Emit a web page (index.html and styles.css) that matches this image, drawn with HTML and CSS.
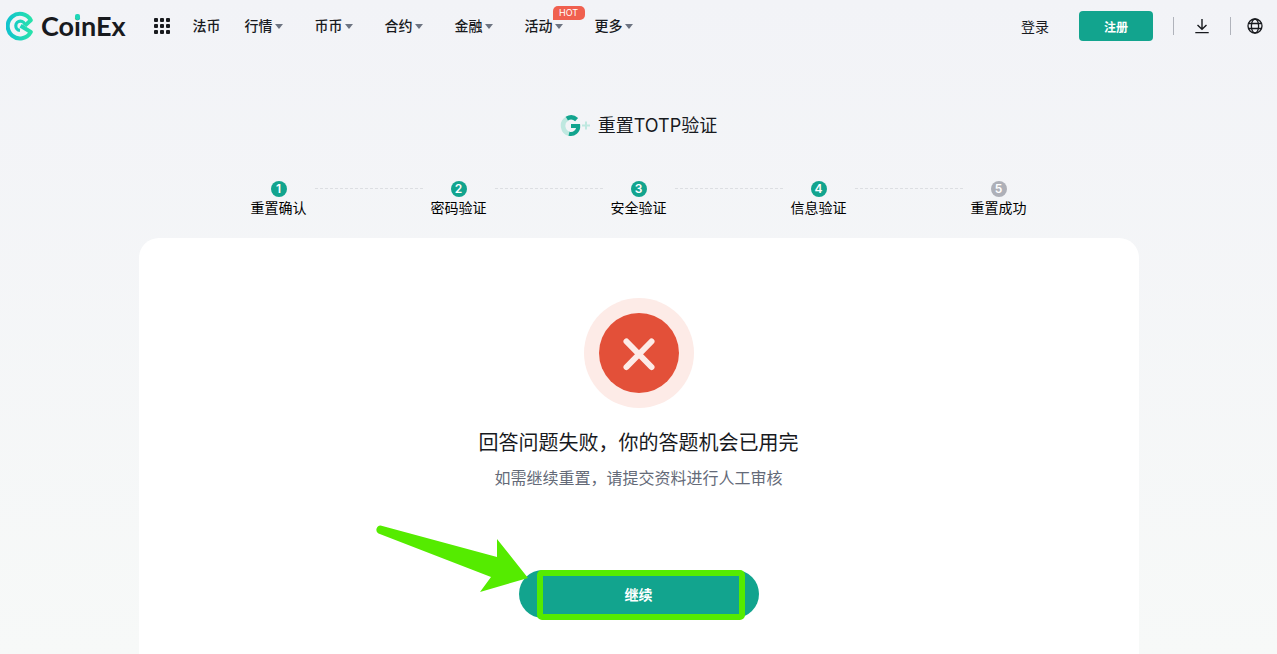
FILE: index.html
```html
<!DOCTYPE html>
<html lang="zh-CN">

<head>
    <meta charset="UTF-8">
    <meta name="viewport" content="width=device-width, initial-scale=1.0">
    <title>重置TOTP验证 - CoinEx</title>
    <link rel="stylesheet" href="styles.css">
</head>

<body>

    <!--* Top navigation -->
    <header class="header">
        <a href="#" class="logo">
            <svg class="logo-mark" viewBox="0 0 28 30" fill="none">
                <defs>
                    <linearGradient id="logoGradient" gradientUnits="userSpaceOnUse" x1="0" y1="0" x2="28" y2="0">
                        <stop offset="0" stop-color="#0fc2cf" />
                        <stop offset="1" stop-color="#2ae5a8" />
                    </linearGradient>
                </defs>
                <path d="M19 14.4L24.8 9.2A12.3 12.3 0 1 0 24.8 21L14.6 14.8" stroke="url(#logoGradient)"
                    stroke-width="4" stroke-linejoin="round" />
                <path d="M19 14.6A4.6 4.6 0 1 0 14 19.4" stroke="url(#logoGradient)" stroke-width="3.2" />
            </svg>
            <span class="logo-text">Co<span class="logo-i">i</span>nEx</span>
        </a>

        <button class="icon-button apps-button" aria-label="全部应用">
            <svg width="16" height="16" viewBox="0 0 16 16" fill="currentColor">
                <rect width="4" height="4" rx="1" />
                <rect x="6" width="4" height="4" rx="1" />
                <rect x="12" width="4" height="4" rx="1" />
                <rect y="6" width="4" height="4" rx="1" />
                <rect x="6" y="6" width="4" height="4" rx="1" />
                <rect x="12" y="6" width="4" height="4" rx="1" />
                <rect y="12" width="4" height="4" rx="1" />
                <rect x="6" y="12" width="4" height="4" rx="1" />
                <rect x="12" y="12" width="4" height="4" rx="1" />
            </svg>
        </button>

        <nav class="nav">
            <a href="#" class="nav-link">法币</a>
            <a href="#" class="nav-link has-menu">行情</a>
            <a href="#" class="nav-link has-menu">币币</a>
            <a href="#" class="nav-link has-menu">合约</a>
            <a href="#" class="nav-link has-menu">金融</a>
            <a href="#" class="nav-link has-menu">活动<span class="hot-badge">HOT</span></a>
            <a href="#" class="nav-link has-menu">更多</a>
        </nav>

        <div class="header-right">
            <a href="#" class="login-link">登录</a>
            <button class="register-button">注册</button>
            <div class="tools">
                <button class="icon-button download-button" aria-label="下载">
                    <svg width="16" height="16" viewBox="0 0 16 16" fill="none" stroke="currentColor"
                        stroke-width="1.4">
                        <path d="M8 1V11M3.5 7L8 11.3L12.5 7M1.3 14.6H14.7" />
                    </svg>
                </button>
                <button class="icon-button" aria-label="语言">
                    <svg width="16" height="16" viewBox="0 0 16 16" fill="none" stroke="currentColor"
                        stroke-width="1.3">
                        <circle cx="8" cy="8" r="7" />
                        <ellipse cx="8" cy="8" rx="3.6" ry="7" />
                        <path d="M1.6 5.5H14.4M1.6 10.5H14.4" />
                    </svg>
                </button>
            </div>
        </div>
    </header>

    <main class="main">
        <h1 class="title">
            <svg width="30" height="22" viewBox="0 0 30 22" fill="none">
                <path d="M7 3.8A8.2 8.2 0 0 0 9.5 18.8" stroke="#bfe8e0" stroke-width="4.6" />
                <path d="M6.8 3.7A8.3 8.3 0 0 1 16.6 4.6" stroke="#12a48e" stroke-width="4.4" />
                <path d="M11 11H18.2A7.4 7.4 0 0 1 9 18.8" stroke="#12a48e" stroke-width="4" />
                <path d="M22 10.5H30M26 6.5V14.5" stroke="#bfe8e0" stroke-width="2" />
            </svg>
            重置TOTP验证
        </h1>

        <ol class="steps">
            <li class="step"><span class="step-number">1</span>重置确认</li>
            <li class="step"><span class="step-number">2</span>密码验证</li>
            <li class="step"><span class="step-number">3</span>安全验证</li>
            <li class="step"><span class="step-number">4</span>信息验证</li>
            <li class="step pending"><span class="step-number">5</span>重置成功</li>
        </ol>

        <!--* Result card -->
        <section class="card">
            <svg class="fail-icon" width="110" height="110" viewBox="0 0 110 110">
                <circle cx="55" cy="55" r="55" fill="#fdebe7" />
                <circle cx="55" cy="55" r="40" fill="#e35039" />
                <path d="M42.5 43.5L67.5 69M67.5 43.5L42.5 69" stroke="#fdebe7" stroke-width="6"
                    stroke-linecap="round" />
            </svg>
            <h2 class="message">回答问题失败，你的答题机会已用完</h2>
            <p class="sub-message">如需继续重置，请提交资料进行人工审核</p>

            <div class="action">
                <button class="continue-button">继续</button>
                <svg class="pointer" width="372" height="98" viewBox="0 0 372 98">
                    <path d="M5.5 0.5L122 32V14L153 53L105 67L116 52L3.5 8.5A4.3 4.3 0 0 1 5.5 0.5Z" fill="#55eb00" />
                    <rect x="165" y="48" width="202" height="44" rx="2" fill="none" stroke="#55eb00"
                        stroke-width="6" />
                </svg>
            </div>
        </section>
    </main>

</body>

</html>
```

FILE: styles.css
```css
* {
    box-sizing: border-box;
}

body {
    margin: 0;
    min-height: 100vh;
    display: flex;
    flex-direction: column;
    font-family: Inter, "Noto Sans CJK SC", sans-serif;
    font-size: 14px;
    color: #181a1e;
    background: linear-gradient(#f2f3f7, #f7f9f8);
}

a {
    color: inherit;
    text-decoration: none;
}

button {
    padding: 0;
    border: none;
    font-family: inherit;
    cursor: pointer;
}

.header {
    display: flex;
    align-items: center;
    height: 52px;
    padding: 0 14px 0 6px;
}

.logo {
    display: flex;
    align-items: center;
    gap: 7px;
}

.logo-mark {
    width: 28px;
    height: 30px;
}

.logo-text {
    font-family: Lato, sans-serif;
    font-size: 27px;
    font-weight: 700;
    line-height: 30px;
}

.logo-i {
    position: relative;
}

/* teal dot over the i */
.logo-i::before {
    content: "";
    position: absolute;
    top: 5px;
    left: 1px;
    width: 5px;
    height: 6px;
    border-radius: 2px;
    background: #1fd6b8;
}

.icon-button {
    display: flex;
    color: #181a1e;
    background: none;
}

.apps-button {
    margin-left: 28px;
}

.nav {
    display: flex;
    gap: 32px;
    margin-left: 23px;
    font-weight: 500;
    line-height: 20px;
}

.nav-link {
    position: relative;
    display: flex;
    align-items: center;
    gap: 2px;
}

.nav-link:first-child {
    margin-right: -8px;
}

.has-menu::after {
    content: "";
    border: 4px solid transparent;
    border-top: 5px solid #6d7482;
    border-bottom: 0;
}

.hot-badge {
    position: absolute;
    top: -10px;
    left: 28px;
    width: 32px;
    height: 14px;
    border-radius: 5px 5px 5px 0;
    font-size: 9px;
    font-weight: 400;
    line-height: 14px;
    text-align: center;
    color: #fff;
    background: #f0604f;
}

.header-right {
    display: flex;
    align-items: center;
    gap: 20px;
    margin-left: auto;
}

.login-link {
    margin-right: 10px;
}

.register-button {
    width: 74px;
    height: 30px;
    border-radius: 4px;
    font-size: 12px;
    font-weight: 700;
    color: #fff;
    background: #12a48e;
}

.tools {
    display: flex;
    align-items: center;
    gap: 16px;
}

.download-button {
    padding: 1px 20px;
    border: 1px solid #b0b3bb;
    border-width: 0 1px;
}

.main {
    flex: 1;
    display: flex;
    flex-direction: column;
    align-items: center;
    padding-top: 61px;
}

.title {
    display: flex;
    align-items: center;
    gap: 8px;
    margin: 0;
    font-size: 18px;
    font-weight: 400;
    line-height: 26px;
}

.steps {
    display: flex;
    width: 100%;
    max-width: 900px;
    margin: 42px 0 20px;
    padding: 0;
    list-style: none;
    color: #000;
}

.step {
    position: relative;
    flex: 1;
    display: flex;
    flex-direction: column;
    align-items: center;
    gap: 1px;
    line-height: 20px;
}

.step-number {
    width: 16px;
    height: 16px;
    border-radius: 50%;
    font-size: 12px;
    font-weight: 600;
    line-height: 16px;
    text-align: center;
    color: #fff;
    background: #12a48e;
}

.pending .step-number {
    background: #aeb0b8;
}

/* dashed line to the next step */
.step:not(:last-child)::after {
    content: "";
    position: absolute;
    top: 7px;
    left: 70%;
    width: 60%;
    border-top: 1px dashed #dcdee2;
}

.card {
    flex: 1;
    display: flex;
    flex-direction: column;
    align-items: center;
    width: 100%;
    max-width: 1000px;
    padding: 60px 20px 36px;
    border-radius: 20px 20px 0 0;
    background: #fff;
}

.message {
    margin: 20px 0 0;
    font-size: 20px;
    font-weight: 400;
    line-height: 30px;
}

.sub-message {
    margin: 8px 0 0;
    font-size: 16px;
    line-height: 24px;
    color: #646a78;
}

.action {
    position: relative;
    margin-top: 80px;
}

.continue-button {
    display: block;
    width: 240px;
    height: 48px;
    border-radius: 24px;
    font-size: 14px;
    font-weight: 700;
    color: #fff;
    background: #12a48e;
}

.pointer {
    position: absolute;
    top: -45px;
    left: -144px;
    pointer-events: none;
}
```
